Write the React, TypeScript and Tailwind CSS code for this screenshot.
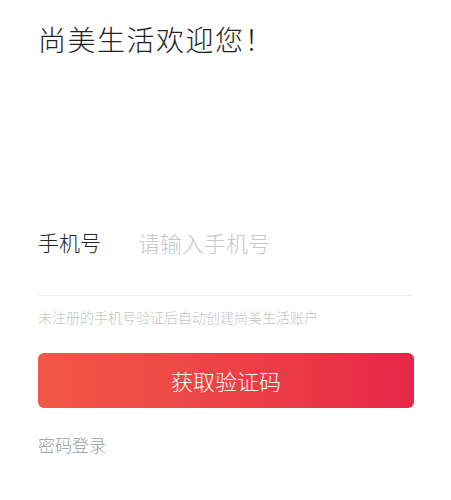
export default function App() {
  const font = { fontFamily: '"Noto Sans CJK SC", "Noto Sans", sans-serif' };
  return (
    <div className="w-[451px] h-[500px] bg-white flex flex-col px-[38px]" style={font}>
      <h1 className="mt-[19px] text-[28px] leading-[40px] font-light text-[#222] tracking-[1.5px]">尚美生活欢迎您！</h1>
      <div className="mt-[168px] flex items-center h-[30px]">
        <span className="text-[21px] font-light text-[#222] w-[100px] leading-[30px]">手机号</span>
        <span className="text-[22px] font-light text-[#c8c8c8] leading-[30px]">请输入手机号</span>
      </div>
      <div className="mt-[38px] h-px bg-[#eeeeee] w-[375px]" />
      <p className="mt-[11px] text-[14px] leading-[20px] font-light text-[#c4c4c4]">未注册的手机号验证后自动创建尚美生活账户</p>
      <button className="mt-[26px] h-[55px] w-[376px] rounded-[6px] bg-gradient-to-r from-[#f15745] to-[#e62647] text-white text-[22px] font-light flex items-center justify-center">
        获取验证码
      </button>
      <p className="mt-[25px] text-[17px] leading-[24px] font-light text-[#999]">密码登录</p>
    </div>
  );
}
